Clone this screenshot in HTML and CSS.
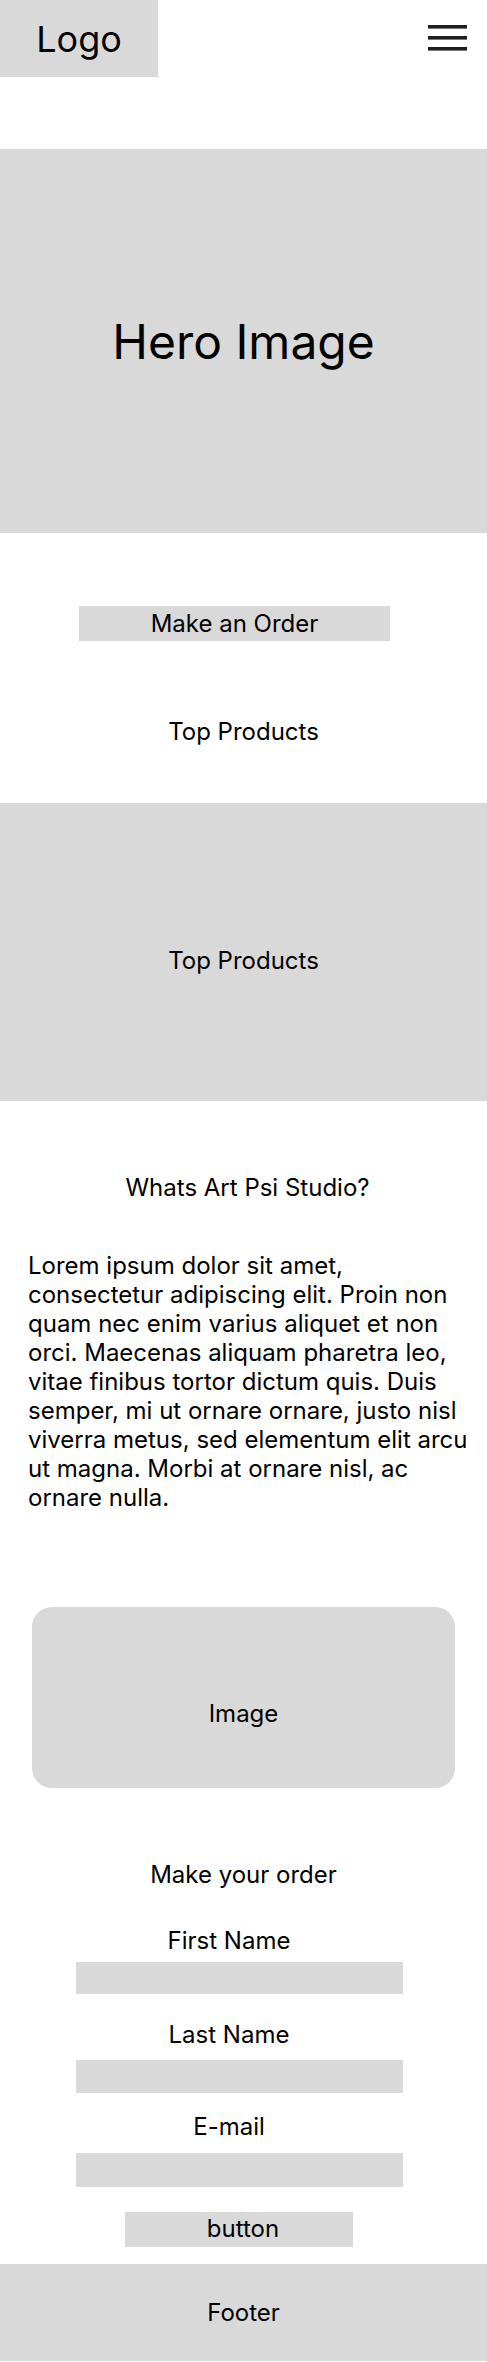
FILE: index.html
```html
<!DOCTYPE html>
<html lang="en">
<head>
<meta charset="utf-8">
<title>Art Psi Studio</title>
<link rel="stylesheet" href="styles.css">
</head>
<body>
<header class="header">
  <div class="logo">Logo</div>
  <svg class="burger" width="39" height="26" viewBox="0 0 39 26" aria-label="Menu">
    <rect x="0" y="0" width="39" height="3.6" fill="#1e1e1e"/>
    <rect x="0" y="11" width="39" height="3.6" fill="#1e1e1e"/>
    <rect x="0" y="22" width="39" height="3.6" fill="#1e1e1e"/>
  </svg>
</header>

<section class="hero">Hero Image</section>

<div class="cta">Make an Order</div>

<h2 class="title title-top">Top Products</h2>

<section class="products">Top Products</section>

<h2 class="title title-about">Whats Art Psi Studio?</h2>

<p class="about">Lorem ipsum dolor sit amet, consectetur adipiscing elit. Proin non quam nec enim varius aliquet et non orci. Maecenas aliquam pharetra leo, vitae finibus tortor dictum quis. Duis semper, mi ut ornare ornare, justo nisl viverra metus, sed elementum elit arcu ut magna. Morbi at ornare nisl, ac ornare nulla.</p>

<div class="image">Image</div>

<h2 class="title title-order">Make your order</h2>

<form class="form">
  <label class="label label-first" for="fn">First Name</label>
  <input class="field field-first" id="fn" type="text">
  <label class="label label-last" for="ln">Last Name</label>
  <input class="field field-last" id="ln" type="text">
  <label class="label label-mail" for="em">E-mail</label>
  <input class="field field-mail" id="em" type="email">
  <button class="submit" type="button">button</button>
</form>

<footer class="footer">Footer</footer>
</body>
</html>
```

FILE: styles.css
```css
* {
  box-sizing: border-box;
}

html, body {
  margin: 0;
  padding: 0;
  background: #ffffff;
}

body {
  font-family: Inter, "Noto Sans", sans-serif;
  font-size: 24px;
  line-height: normal;
  color: #000000;
  width: 487px;
}

.header {
  display: flex;
  justify-content: space-between;
  align-items: flex-start;
  height: 77px;
}

.logo {
  width: 158px;
  height: 77px;
  background: #d9d9d9;
  display: flex;
  align-items: center;
  justify-content: center;
  font-size: 36px;
}

.burger {
  display: block;
  margin-top: 25px;
  margin-right: 20px;
}

.hero {
  margin-top: 72px;
  height: 384px;
  background: #d9d9d9;
  display: flex;
  align-items: center;
  justify-content: center;
  font-size: 48px;
}

.cta {
  margin: 73px 0 0 79px;
  width: 311px;
  height: 35px;
  background: #d9d9d9;
  display: flex;
  align-items: center;
  justify-content: center;
}

.title {
  margin: 0;
  font-size: 24px;
  font-weight: 400;
  text-align: center;
  line-height: normal;
}

.title-top {
  margin-top: 76px;
}

.products {
  margin-top: 57px;
  height: 298px;
  background: #d9d9d9;
  display: flex;
  align-items: center;
  justify-content: center;
  padding-top: 17px;
}

.title-about {
  margin-top: 72px;
  padding-left: 8px;
}

.about {
  margin: 49px 0 0 28px;
  width: 446px;
  line-height: normal;
}

.image {
  margin: 95px 0 0 32px;
  width: 423px;
  height: 181px;
  border-radius: 20px;
  background: #d9d9d9;
  display: flex;
  align-items: center;
  justify-content: center;
  padding-top: 31px;
}

.title-order {
  margin-top: 72px;
}

.form {
  display: flex;
  flex-direction: column;
  margin: 0;
}

.label {
  display: block;
  width: 327px;
  margin-left: 76px;
  padding-right: 21px;
  text-align: center;
  line-height: normal;
}

.label-first { margin-top: 37px; }
.label-last { margin-top: 26px; }
.label-mail { margin-top: 19px; }

.field {
  display: block;
  width: 327px;
  margin-left: 76px;
  border: 0;
  padding: 0;
  background: #d9d9d9;
  font: inherit;
  outline: none;
}

.field-first { margin-top: 7px; height: 32px; }
.field-last { margin-top: 11px; height: 33px; }
.field-mail { margin-top: 12px; height: 34px; }

.submit {
  margin: 25px 0 0 125px;
  width: 228px;
  height: 35px;
  border: 0;
  background: #d9d9d9;
  font: inherit;
  color: #000000;
  padding: 0 0 2px 8px;
  line-height: normal;
}

.footer {
  margin-top: 17px;
  height: 97px;
  background: #d9d9d9;
  display: flex;
  align-items: center;
  justify-content: center;
}
```
